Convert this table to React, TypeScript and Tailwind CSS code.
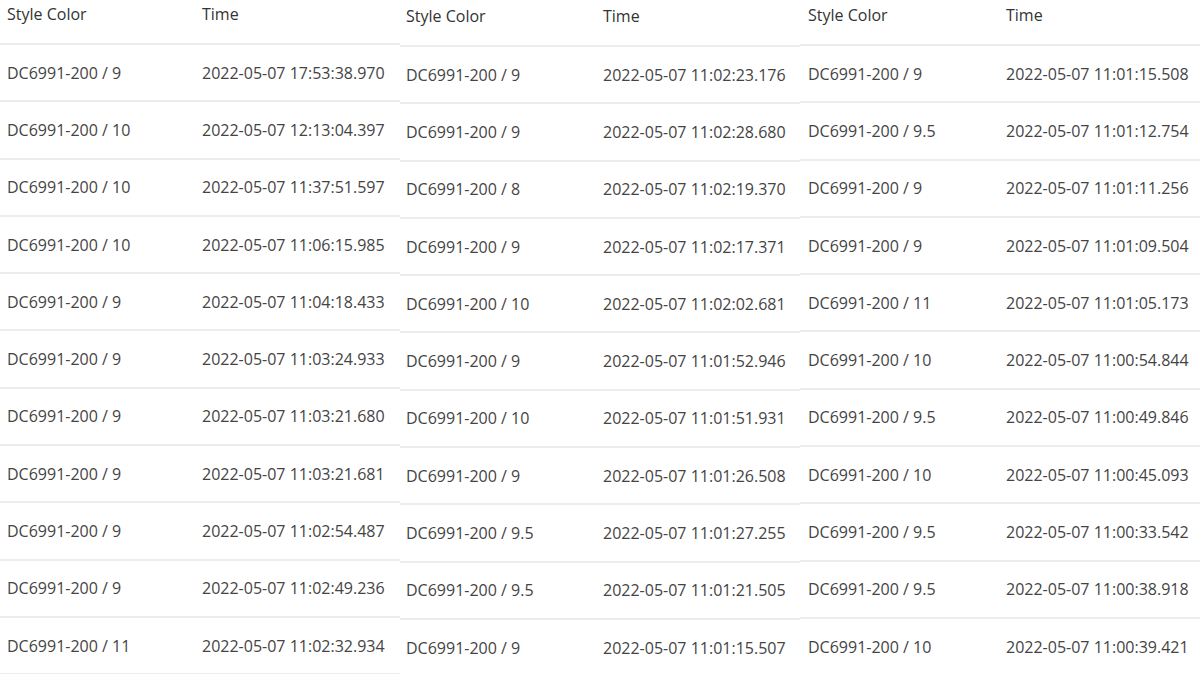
type Row = { style: string; time: string };

const tables: { offset: string; pad: string; timeCol: string; rows: Row[] }[] = [
    {
        offset: 'mt-0',
        pad: 'pl-[7px]',
        timeCol: 'grid-cols-[195px_1fr]',
        rows: [
            { style: 'DC6991-200 / 9', time: '2022-05-07 17:53:38.970' },
            { style: 'DC6991-200 / 10', time: '2022-05-07 12:13:04.397' },
            { style: 'DC6991-200 / 10', time: '2022-05-07 11:37:51.597' },
            { style: 'DC6991-200 / 10', time: '2022-05-07 11:06:15.985' },
            { style: 'DC6991-200 / 9', time: '2022-05-07 11:04:18.433' },
            { style: 'DC6991-200 / 9', time: '2022-05-07 11:03:24.933' },
            { style: 'DC6991-200 / 9', time: '2022-05-07 11:03:21.680' },
            { style: 'DC6991-200 / 9', time: '2022-05-07 11:03:21.681' },
            { style: 'DC6991-200 / 9', time: '2022-05-07 11:02:54.487' },
            { style: 'DC6991-200 / 9', time: '2022-05-07 11:02:49.236' },
            { style: 'DC6991-200 / 11', time: '2022-05-07 11:02:32.934' },
        ],
    },
    {
        offset: 'mt-[2px]',
        pad: 'pl-[6px]',
        timeCol: 'grid-cols-[197px_1fr]',
        rows: [
            { style: 'DC6991-200 / 9', time: '2022-05-07 11:02:23.176' },
            { style: 'DC6991-200 / 9', time: '2022-05-07 11:02:28.680' },
            { style: 'DC6991-200 / 8', time: '2022-05-07 11:02:19.370' },
            { style: 'DC6991-200 / 9', time: '2022-05-07 11:02:17.371' },
            { style: 'DC6991-200 / 10', time: '2022-05-07 11:02:02.681' },
            { style: 'DC6991-200 / 9', time: '2022-05-07 11:01:52.946' },
            { style: 'DC6991-200 / 10', time: '2022-05-07 11:01:51.931' },
            { style: 'DC6991-200 / 9', time: '2022-05-07 11:01:26.508' },
            { style: 'DC6991-200 / 9.5', time: '2022-05-07 11:01:27.255' },
            { style: 'DC6991-200 / 9.5', time: '2022-05-07 11:01:21.505' },
            { style: 'DC6991-200 / 9', time: '2022-05-07 11:01:15.507' },
        ],
    },
    {
        offset: 'mt-[1px]',
        pad: 'pl-[8px]',
        timeCol: 'grid-cols-[198px_1fr]',
        rows: [
            { style: 'DC6991-200 / 9', time: '2022-05-07 11:01:15.508' },
            { style: 'DC6991-200 / 9.5', time: '2022-05-07 11:01:12.754' },
            { style: 'DC6991-200 / 9', time: '2022-05-07 11:01:11.256' },
            { style: 'DC6991-200 / 9', time: '2022-05-07 11:01:09.504' },
            { style: 'DC6991-200 / 11', time: '2022-05-07 11:01:05.173' },
            { style: 'DC6991-200 / 10', time: '2022-05-07 11:00:54.844' },
            { style: 'DC6991-200 / 9.5', time: '2022-05-07 11:00:49.846' },
            { style: 'DC6991-200 / 10', time: '2022-05-07 11:00:45.093' },
            { style: 'DC6991-200 / 9.5', time: '2022-05-07 11:00:33.542' },
            { style: 'DC6991-200 / 9.5', time: '2022-05-07 11:00:38.918' },
            { style: 'DC6991-200 / 10', time: '2022-05-07 11:00:39.421' },
        ],
    },
];

export default function App() {
    return (
        <div className="flex h-[674px] w-[1200px] overflow-hidden bg-white font-['Open_Sans',sans-serif] text-[16px] text-[#444]">
            {tables.map((table, i) => (
                <div key={i} className={`w-[400px] shrink-0 ${table.offset}`}>
                    <div
                        className={`grid h-[43px] ${table.timeCol} ${table.pad} pt-[2px] text-[#333]`}
                    >
                        <span>Style Color</span>
                        <span>Time</span>
                    </div>
                    {table.rows.map((row, j) => (
                        <div
                            key={j}
                            className={`grid h-[57.3px] ${table.timeCol} ${table.pad} items-center border-t-2 border-[#ececec]`}
                        >
                            <span>{row.style}</span>
                            <span>{row.time}</span>
                        </div>
                    ))}
                    <div className="border-t-2 border-[#ececec]" />
                </div>
            ))}
        </div>
    );
}
